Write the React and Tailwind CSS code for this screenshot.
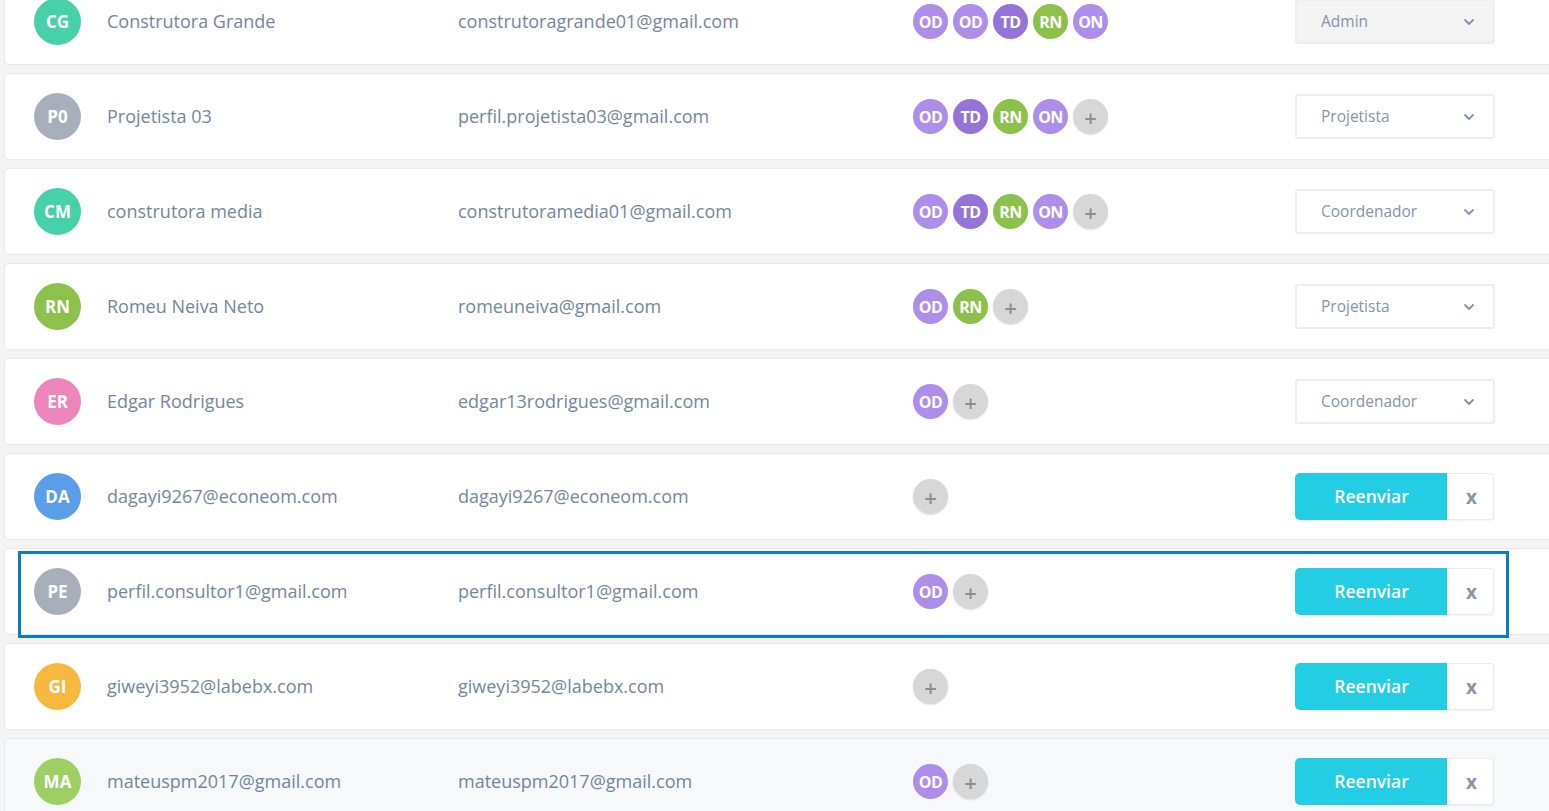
import { ChevronDown } from 'lucide-react'

const badgeColors = {
  OD: 'bg-[#ad8eea]',
  TD: 'bg-[#9574da]',
  RN: 'bg-[#8cc14c]',
  ON: 'bg-[#ad8eea]',
}

const users = [
  { initials: 'CG', color: 'bg-[#47d1a9]', name: 'Construtora Grande', email: 'construtoragrande01@gmail.com', badges: ['OD', 'OD', 'TD', 'RN', 'ON'], plus: false, role: 'Admin', locked: true },
  { initials: 'P0', color: 'bg-[#a8afbb]', name: 'Projetista 03', email: 'perfil.projetista03@gmail.com', badges: ['OD', 'TD', 'RN', 'ON'], plus: true, role: 'Projetista' },
  { initials: 'CM', color: 'bg-[#47d1a9]', name: 'construtora media', email: 'construtoramedia01@gmail.com', badges: ['OD', 'TD', 'RN', 'ON'], plus: true, role: 'Coordenador' },
  { initials: 'RN', color: 'bg-[#8cc14c]', name: 'Romeu Neiva Neto', email: 'romeuneiva@gmail.com', badges: ['OD', 'RN'], plus: true, role: 'Projetista' },
  { initials: 'ER', color: 'bg-[#ec86bb]', name: 'Edgar Rodrigues', email: 'edgar13rodrigues@gmail.com', badges: ['OD'], plus: true, role: 'Coordenador' },
  { initials: 'DA', color: 'bg-[#5a9de9]', name: 'dagayi9267@econeom.com', email: 'dagayi9267@econeom.com', badges: [], plus: true, pending: true },
  { initials: 'PE', color: 'bg-[#a8afbb]', name: 'perfil.consultor1@gmail.com', email: 'perfil.consultor1@gmail.com', badges: ['OD'], plus: true, pending: true, selected: true },
  { initials: 'GI', color: 'bg-[#f6b940]', name: 'giweyi3952@labebx.com', email: 'giweyi3952@labebx.com', badges: [], plus: true, pending: true },
  { initials: 'MA', color: 'bg-[#9dd062]', name: 'mateuspm2017@gmail.com', email: 'mateuspm2017@gmail.com', badges: ['OD'], plus: true, pending: true, hover: true },
]

function Badge({ label }) {
  return (
    <span className={`grid size-[35px] place-items-center rounded-full text-[16px] font-bold tracking-[-0.5px] text-white ${badgeColors[label]}`}>
      {label}
    </span>
  )
}

function PlusBadge() {
  return (
    <span className="grid size-[35px] place-items-center rounded-full bg-[#d7d7d7] text-[22px] font-semibold leading-none text-[#8e8e8e] shadow-[0_1px_2px_rgba(0,0,0,0.12)]">
      +
    </span>
  )
}

function RoleSelect({ role, locked }) {
  return (
    <div
      className={`flex h-[45px] w-[200px] items-center justify-between rounded-[3px] border-2 border-[#eceef1] pl-[24px] pr-[16px] text-[15.5px] text-[#8594a7] ${
        locked ? 'bg-[#f3f3f4]' : 'bg-white'
      }`}
    >
      <span>{role}</span>
      <ChevronDown className="size-[16px] text-[#7d93ad]" strokeWidth={2.75} />
    </div>
  )
}

function PendingActions() {
  return (
    <div className="flex h-[47px] w-[199px]">
      <button className="flex-1 rounded-l-[5px] bg-[#23cde4] pl-[1px] text-[17.5px] font-semibold text-white" type="button">
        Reenviar
      </button>
      <button className="w-[47px] rounded-r-[4px] border border-l-0 border-[#e9ebee] bg-white pl-[3px] pt-[2px] text-[19px] font-bold text-[#8695a7] shadow-[0_1px_2px_rgba(0,0,0,0.05)]" type="button">
        x
      </button>
    </div>
  )
}

function UserRow({ user }) {
  return (
    <div
      className={`relative flex h-[87px] shrink-0 items-center rounded-[5px] border border-[#e7e8ea] pl-[29px] ${
        user.hover ? 'bg-[#f7f8fa]' : 'bg-white'
      }`}
    >
      <span className={`grid size-[47px] shrink-0 place-items-center rounded-full text-[17px] font-bold text-white ${user.color}`}>
        {user.initials}
      </span>
      <span className="ml-[26px] w-[351px] shrink-0 text-[18px] text-[#74869c]">{user.name}</span>
      <span className="w-[455px] shrink-0 text-[18px] text-[#74869c]">{user.email}</span>
      <div className="flex w-[382px] shrink-0 items-center gap-[5px]">
        {user.badges.map((b, i) => (
          <Badge key={i} label={b} />
        ))}
        {user.plus && <PlusBadge />}
      </div>
      {user.pending ? <PendingActions /> : <RoleSelect role={user.role} locked={user.locked} />}

      {user.selected && (
        <div className="pointer-events-none absolute left-[13px] top-[2px] h-[87px] w-[1491px] border-[3px] border-[#0a7dc2]" />
      )}
    </div>
  )
}

export default function App() {
  return (
    <div className="h-[811px] overflow-hidden bg-[#f4f4f5] pl-[4px] font-['Open_Sans',sans-serif]">
      <div className="mr-[-20px] mt-[-22px] flex flex-col gap-[8px]">
        {users.map((user) => (
          <UserRow key={user.email} user={user} />
        ))}
      </div>
    </div>
  )
}
